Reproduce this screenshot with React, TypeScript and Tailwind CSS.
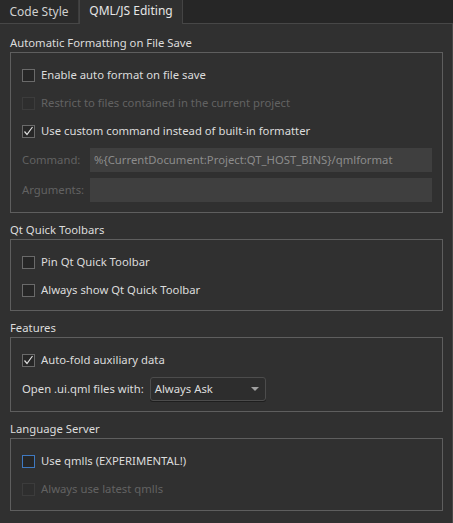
const font = { fontFamily: '"Noto Sans", "Open Sans", sans-serif' };

const Check = ({ checked, disabled, focus }: { checked?: boolean; disabled?: boolean; focus?: boolean }) => (
  <span
    className={
      "flex h-[13px] w-[13px] shrink-0 items-center justify-center border " +
      (focus
        ? "border-[#3f79c0] bg-[#262626]"
        : disabled
        ? "border-[#3c3c3c] bg-[#2e2e2e]"
        : "border-[#6a6a6a] bg-[#262626]")
    }
  >
    {checked && (
      <svg width="11" height="11" viewBox="0 0 11 11">
        <polyline points="1.5,5.5 4,8.5 9.5,1" fill="none" stroke="#e0e0e0" strokeWidth="1.2" />
      </svg>
    )}
  </span>
);

const Row = ({ label, checked, disabled, focus }: { label: string; checked?: boolean; disabled?: boolean; focus?: boolean }) => (
  <div className="flex h-[28px] items-center gap-[6px] pt-px">
    <Check checked={checked} disabled={disabled} focus={focus} />
    <span className={disabled ? "text-[#626262]" : "text-[#dcdcdc]"}>{label}</span>
  </div>
);

const Group = ({ title, className, children }: { title: string; className: string; children: React.ReactNode }) => (
  <div className="w-[433px]">
    <div className="h-[18px] leading-[18px] text-[#dcdcdc]">{title}</div>
    <div className={"border border-[#5e5e5e] pl-[11px] pr-[10px] " + className}>{children}</div>
  </div>
);

export default function App() {
  return (
    <div className="h-[523px] w-[453px] overflow-hidden bg-[#262626] text-[11.3px]" style={font}>
      <div className="flex h-[23px] items-stretch text-[12px]">
        <div className="flex w-[79px] items-center justify-center border-r border-[#3d3d3d] bg-[#2a2a2a] text-[#d0d0d0]">
          Code Style
        </div>
        <div className="z-10 -mb-px flex w-[104px] items-center justify-center border-x border-[#444] bg-[#303030] pb-[2px] text-[#e6e6e6]">
          QML/JS Editing
        </div>
      </div>
      <div className="h-[500px] border-t border-r border-[#474747] bg-[#303030] pl-[10px] pt-[10px]">
        <Group title="Automatic Formatting on File Save" className="pt-[8px] pb-[10px]">
          <Row label="Enable auto format on file save" />
          <Row label="Restrict to files contained in the current project" disabled />
          <Row label="Use custom command instead of built-in formatter" checked />
          <div className="mt-[3px] flex h-[24px] items-center">
            <span className="w-[68px] text-[#626262]">Command:</span>
            <div className="flex h-full flex-1 items-center bg-[#3f3f3f] pl-[4px] text-[#8c8c8c]">
              %{"{"}CurrentDocument:Project:QT_HOST_BINS{"}"}/qmlformat
            </div>
          </div>
          <div className="mt-[6px] flex h-[24px] items-center">
            <span className="w-[68px] text-[#626262]">Arguments:</span>
            <div className="h-full flex-1 bg-[#3f3f3f]" />
          </div>
        </Group>
        <div className="mt-[8px]">
          <Group title="Qt Quick Toolbars" className="pt-[8px] pb-[6px]">
            <Row label="Pin Qt Quick Toolbar" />
            <Row label="Always show Qt Quick Toolbar" />
          </Group>
        </div>
        <div className="mt-[8px]">
          <Group title="Features" className="pt-[8px] pb-[10px]">
            <Row label="Auto-fold auxiliary data" checked />
            <div className="mt-[3px] flex h-[24px] items-center gap-[6px]">
              <span className="whitespace-nowrap text-[#dcdcdc]">Open .ui.qml files with:</span>
              <div className="flex h-full w-[116px] items-center justify-between rounded-[3px] border border-[#4c4c4c] bg-[#2d2d2d] pl-[4px] pr-[6px] text-[#dcdcdc] shadow-[0_1px_0_#1e1e1e]">
                <span>Always Ask</span>
                <svg width="8" height="4" viewBox="0 0 8 4">
                  <polygon points="0,0 8,0 4,4" fill="#a0a0a0" />
                </svg>
              </div>
            </div>
          </Group>
        </div>
        <div className="mt-[8px]">
          <Group title="Language Server" className="pt-[8px] pb-[7px]">
            <Row label="Use qmlls (EXPERIMENTAL!)" focus />
            <Row label="Always use latest qmlls" disabled />
          </Group>
        </div>
      </div>
    </div>
  );
}
